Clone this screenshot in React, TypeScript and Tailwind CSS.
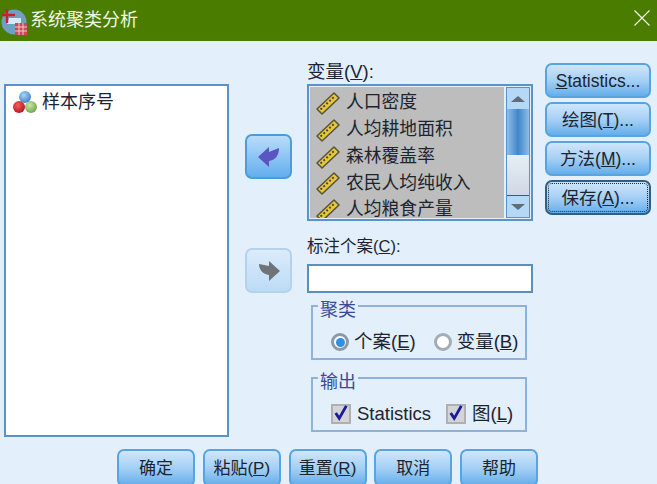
import type { ReactNode } from 'react';

const cjk = "font-['Liberation_Sans','Noto_Sans_CJK_SC',sans-serif]";

function Ruler() {
  return (
    <svg width="26" height="24" viewBox="0 0 26 24" className="shrink-0">
      <path d="M2 18 L19 2 L24 7 L7 23 Z" fill="#e8c83a" stroke="#56563a" strokeWidth="1.6" strokeLinejoin="round" />
      <path d="M5.5 18.5 L19.5 5.5" stroke="#4a4a30" strokeWidth="2" strokeDasharray="2 2" />
    </svg>
  );
}

function Balls() {
  return (
    <svg width="26" height="24" viewBox="0 0 26 24" className="shrink-0">
      <defs>
        <radialGradient id="ballBlue" cx="40%" cy="35%" r="70%">
          <stop offset="0%" stopColor="#a9d3f7" />
          <stop offset="100%" stopColor="#3d7fc4" />
        </radialGradient>
        <radialGradient id="ballRed" cx="40%" cy="35%" r="70%">
          <stop offset="0%" stopColor="#f0605a" />
          <stop offset="100%" stopColor="#b3141c" />
        </radialGradient>
        <radialGradient id="ballGreen" cx="40%" cy="35%" r="70%">
          <stop offset="0%" stopColor="#cfe6a8" />
          <stop offset="100%" stopColor="#6ea24a" />
        </radialGradient>
      </defs>
      <circle cx="13" cy="7" r="6" fill="url(#ballBlue)" />
      <circle cx="19" cy="17" r="6" fill="url(#ballGreen)" />
      <circle cx="7" cy="17" r="6" fill="url(#ballRed)" />
    </svg>
  );
}

function AppIcon() {
  return (
    <svg width="26" height="30" viewBox="0 0 26 30" className="shrink-0">
      <circle cx="13" cy="16" r="12.5" fill="#6f9fc4" />
      <path d="M6 18 H20 V12 H8 Z" fill="#dbe8f2" />
      <path d="M6 3 V17 M1 9 H14" stroke="#c8202c" strokeWidth="2.4" />
      <rect x="14" y="17" width="12" height="12" fill="#c84a55" />
      <path d="M14 21 H26 M14 25 H26 M18 17 V29 M22 17 V29" stroke="#f0c8cc" strokeWidth="1" />
    </svg>
  );
}

function DialogButton({ children, focused }: { children: ReactNode; focused?: boolean }) {
  return (
    <button
      className={
        'w-full h-[35px] pt-[2px] rounded-[7px] border-2 bg-gradient-to-b from-[#cfe6fb] via-[#a5d0f5] to-[#64aeea] text-[#1c2430] text-[17.5px] leading-none whitespace-nowrap ' +
        (focused ? 'border-[#2f5f85] outline-1 outline-dotted -outline-offset-4 outline-[#1b2a3a]' : 'border-[#58a4e0]')
      }
    >
      {children}
    </button>
  );
}

function FooterButton({ children }: { children: ReactNode }) {
  return (
    <button className="w-[78px] h-[38px] rounded-[7px] border-2 border-[#58a4e0] bg-gradient-to-b from-[#cfe6fb] via-[#a5d0f5] to-[#64aeea] text-[#1c2430] text-[17px] leading-none whitespace-nowrap">
      {children}
    </button>
  );
}

function Group({ title, children }: { title: string; children: ReactNode }) {
  return (
    <div className="relative h-[55px] ml-[4px] mr-[6px] border-2 border-[#8fb2d8] pl-[18px] pt-[19px] flex items-center">
      <span className="absolute -top-[6px] left-[5px] px-[2px] bg-[#e3effb] text-[18px] leading-[18px] text-[#3a4a9a]">{title}</span>
      {children}
    </div>
  );
}

function CheckBox() {
  return (
    <span className="w-[20px] h-[20px] border-2 border-[#b0b0b0] bg-[#d4d4d8] flex items-center justify-center shrink-0">
      <svg width="18" height="18" viewBox="0 0 18 18" className="-mt-[2px]">
        <path d="M3 9 L7 15 L15 1" fill="none" stroke="#1a1a9a" strokeWidth="3.2" />
      </svg>
    </span>
  );
}

function ScrollArrow({ up }: { up?: boolean }) {
  return (
    <div className="h-[21px] bg-[#b5d8f7] flex items-center justify-center">
      <svg width="14" height="6" viewBox="0 0 14 6">
        <path d={up ? 'M0 6 L7 0 L14 6 Z' : 'M0 0 L7 6 L14 0 Z'} fill="#5f6d78" />
      </svg>
    </div>
  );
}

const variables = ['人口密度', '人均耕地面积', '森林覆盖率', '农民人均纯收入', '人均粮食产量'];

export default function App() {
  return (
    <div className={`w-[657px] h-[484px] overflow-hidden bg-[#e3effb] text-[#1c2430] ${cjk}`}>
      <div className="h-[41px] bg-[#4a7c00] flex items-center pl-[1px] pr-[7px] text-[#f2f7e6]">
        <AppIcon />
        <span className="ml-[3px] mb-[2px] text-[18px] leading-none">系统聚类分析</span>
        <svg width="16" height="16" viewBox="0 0 16 16" className="ml-auto mb-[5px]">
          <path d="M0.5 0.5 L15.5 15.5 M15.5 0.5 L0.5 15.5" stroke="#f2f7e6" strokeWidth="1.2" />
        </svg>
      </div>

      <div className="flex items-start">
        <div className="ml-[4px] mt-[43px] w-[225px] h-[353px] bg-white border-2 border-[#5a93c8] pt-[4px] pl-[6px]">
          <div className="flex items-center gap-[4px] h-[24px]">
            <Balls />
            <span className="text-[18px] leading-none">样本序号</span>
          </div>
        </div>

        <div className="ml-[16px] mt-[93px] w-[47px] flex flex-col gap-[69px]">
          <button className="h-[45px] rounded-[7px] border-2 border-[#4f9bd8] bg-gradient-to-b from-[#b9dcf9] to-[#62aeee] flex items-center justify-center">
            <svg width="22" height="20" viewBox="0 0 22 20">
              <path d="M0 10 L11 0 V5 L21 1 C21 9 17 13 11 14 V20 Z" fill="#5a55c0" />
            </svg>
          </button>
          <button className="h-[45px] rounded-[7px] border-2 border-[#b4d2ec] bg-gradient-to-b from-[#dbecfb] to-[#bcdbf6] flex items-center justify-center">
            <svg width="22" height="20" viewBox="0 0 22 20">
              <path d="M22 10 L11 0 V5 L1 3 C1 9 5 13 11 14 V20 Z" fill="#6d7378" />
            </svg>
          </button>
        </div>

        <div className="ml-[15px] mt-[21px] w-[226px]">
          <div className="h-[22px] text-[18.5px] leading-[20px]">
            变量(<span className="underline">V</span>):
          </div>
          <div className="h-[137px] border-2 border-[#5a93c8] bg-[#e3effb] flex p-[1px]">
            <div className="w-[195px] bg-[#bdbdbd] overflow-hidden pl-[5px] pt-[3px]">
              {variables.map((name) => (
                <div key={name} className="h-[26.7px] flex items-center gap-[5px]">
                  <Ruler />
                  <span className="text-[17.8px] leading-none">{name}</span>
                </div>
              ))}
            </div>
            <div className="ml-[2px] w-[24px] flex flex-col border border-[#5a93c8]">
              <ScrollArrow up />
              <div className="h-[46px] bg-gradient-to-r from-[#8fbde8] via-[#3f86c8] to-[#8fbde8]" />
              <div className="flex-1 bg-gradient-to-b from-[#e6eef5] to-[#cfd8e4] border-b border-[#3a5a80]" />
              <ScrollArrow />
            </div>
          </div>

          <div className="mt-[15px] h-[28px] text-[16.5px] leading-[20px]">
            标注个案(<span className="underline">C</span>):
          </div>
          <div className="h-[29px] bg-white border-2 border-[#5a8fc0]" />

          <div className="mt-[12px]">
            <Group title="聚类">
              <div className="flex items-center gap-[18px]">
                <label className="flex items-center gap-[5px] text-[18.5px] leading-none">
                  <span className="w-[18px] h-[18px] rounded-full border-[3px] border-[#8a9aa8] bg-white flex items-center justify-center">
                    <span className="w-[9px] h-[9px] rounded-full bg-[#2f8fe0]" />
                  </span>
                  <span>个案(<span className="underline">E</span>)</span>
                </label>
                <label className="flex items-center gap-[5px] text-[18.5px] leading-none">
                  <span className="w-[18px] h-[18px] rounded-full border-[3px] border-[#a4acb4] bg-white" />
                  <span>变量(<span className="underline">B</span>)</span>
                </label>
              </div>
            </Group>
          </div>

          <div className="mt-[17px]">
            <Group title="输出">
              <div className="flex items-center gap-[15px]">
                <label className="flex items-center gap-[6px] text-[18.5px] leading-none">
                  <CheckBox />
                  <span>Statistics</span>
                </label>
                <label className="flex items-center gap-[6px] text-[18.5px] leading-none">
                  <CheckBox />
                  <span>图(<span className="underline">L</span>)</span>
                </label>
              </div>
            </Group>
          </div>
        </div>

        <div className="ml-[12px] mt-[22px] w-[106px] flex flex-col gap-[4px]">
          <DialogButton>
            <span className="underline">S</span>tatistics...
          </DialogButton>
          <DialogButton>
            绘图(<span className="underline">T</span>)...
          </DialogButton>
          <DialogButton>
            方法(<span className="underline">M</span>)...
          </DialogButton>
          <DialogButton focused>
            保存(<span className="underline">A</span>)...
          </DialogButton>
        </div>
      </div>

      <div className="mt-[12px] ml-[117px] flex gap-[7.75px]">
        <FooterButton>确定</FooterButton>
        <FooterButton>
          粘贴(<span className="underline">P</span>)
        </FooterButton>
        <FooterButton>
          重置(<span className="underline">R</span>)
        </FooterButton>
        <FooterButton>取消</FooterButton>
        <FooterButton>帮助</FooterButton>
      </div>
    </div>
  );
}
